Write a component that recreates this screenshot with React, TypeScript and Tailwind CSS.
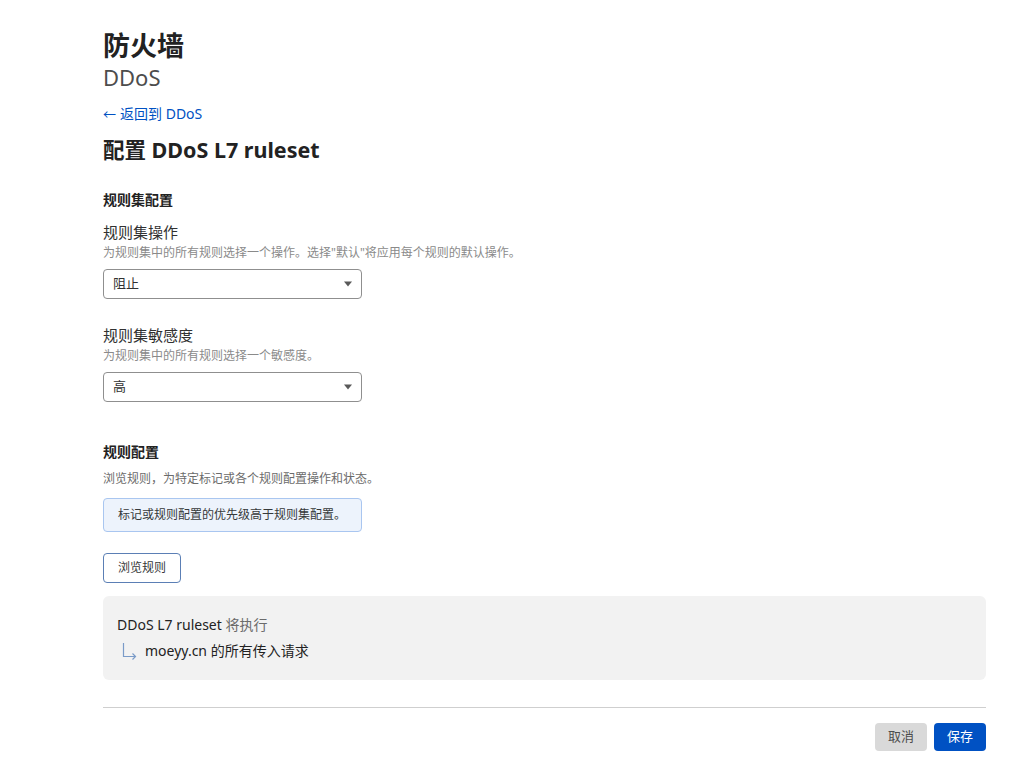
function Select({ value }: { value: string }) {
  return (
    <div className="mt-[8px] flex h-[30px] w-[259px] items-center justify-between rounded-[4px] border border-[#8f8f8f] bg-white pl-[9px] pr-[8px] text-[13px] text-[#313131]">
      <span>{value}</span>
      <svg width="10" height="6" viewBox="0 0 10 6">
        <path d="M1 0.5h8L5 5.5z" fill="#595959" />
      </svg>
    </div>
  );
}

export default function App() {
  return (
    <div
      className="min-h-[773px] bg-white text-[#313131]"
      style={{ fontFamily: '"Noto Sans", "Noto Sans CJK SC", sans-serif' }}
    >
      <div className="ml-[103px] w-[883px] pt-[28px]">
        {/* Page header */}
        <h1 className="text-[27px] font-bold leading-[36px] text-[#222]">防火墙</h1>
        <div className="text-[22px] leading-[26px] text-[#4d4d4d]">DDoS</div>

        <a className="mt-[14px] flex items-center gap-[4px] text-[14px] leading-[20px] text-[#0051c3]">
          <span className="text-[13px]">←</span>
          <span>返回到 DDoS</span>
        </a>

        <h2 className="mt-[11px] text-[21.5px] font-bold leading-[30px] text-[#222]">配置 DDoS L7 ruleset</h2>

        {/* Ruleset config */}
        <h3 className="mt-[25px] text-[14px] font-bold leading-[20px] text-[#222]">规则集配置</h3>

        <div className="mt-[12px] text-[15px] leading-[20px]">规则集操作</div>
        <div className="mt-[3px] text-[12px] leading-[16px] text-[#8a8a8a]">为规则集中的所有规则选择一个操作。选择"默认"将应用每个规则的默认操作。</div>
        <Select value="阻止" />

        <div className="mt-[26px] text-[15px] leading-[20px]">规则集敏感度</div>
        <div className="mt-[3px] text-[12px] leading-[16px] text-[#8a8a8a]">为规则集中的所有规则选择一个敏感度。</div>
        <Select value="高" />

        {/* Rule config */}
        <h3 className="mt-[40px] text-[14px] font-bold leading-[20px] text-[#222]">规则配置</h3>
        <div className="mt-[8px] text-[12px] leading-[18px] text-[#6b6b6b]">浏览规则，为特定标记或各个规则配置操作和状态。</div>

        <div className="mt-[10px] flex h-[34px] w-[259px] items-center rounded-[4px] border border-[#a9c6f0] bg-[#edf3fc] px-[14px] text-[12px] text-[#36393a]">
          标记或规则配置的优先级高于规则集配置。
        </div>

        <button className="mt-[21px] flex h-[30px] w-[78px] items-center justify-center rounded-[4px] border border-[#5b7fb5] bg-white text-[12px] text-[#36393a]">
          浏览规则
        </button>

        {/* Summary */}
        <div className="mt-[13px] rounded-[6px] bg-[#f2f2f2] px-[14px] pb-[18px] pt-[18px] text-[14px]">
          <div className="leading-[22px]">
            <span className="text-[#222]">DDoS L7 ruleset</span> <span className="text-[#6b6b6b]">将执行</span>
          </div>
          <div className="mt-[4px] flex items-center gap-[7px] leading-[22px]">
            <svg width="16" height="18" viewBox="0 0 16 18" className="ml-[5px]">
              <path d="M1.5 1v13.5h12M10.5 11.5l3 3-3 3" fill="none" stroke="#7a9bc8" strokeWidth="1.2" />
            </svg>
            <span className="text-[#222]">moeyy.cn 的所有传入请求</span>
          </div>
        </div>

        <div className="mt-[27px] border-t border-[#cfcfcf]" />

        <div className="mt-[15px] flex justify-end gap-[7px]">
          <button className="flex h-[28px] w-[52px] items-center justify-center rounded-[4px] bg-[#d9d9d9] text-[13px] text-[#4d4d4d]">
            取消
          </button>
          <button className="flex h-[28px] w-[52px] items-center justify-center rounded-[4px] bg-[#0051c3] text-[13px] text-white">
            保存
          </button>
        </div>
      </div>
    </div>
  );
}
